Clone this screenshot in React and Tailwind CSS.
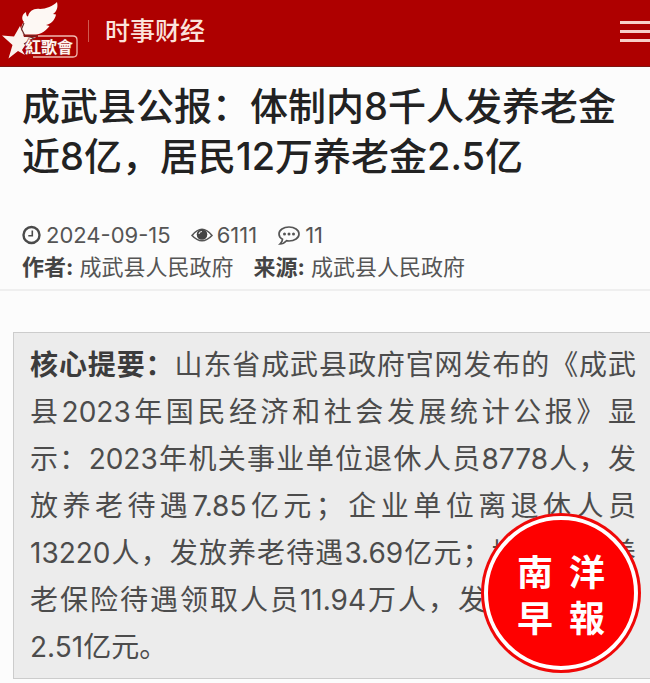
import React from "react";

const summaryLines = [
  "县2023年国民经济和社会发展统计公报》显",
  "示：2023年机关事业单位退休人员8778人，发",
  "放养老待遇7.85亿元；企业单位离退休人员",
  "13220人，发放养老待遇3.69亿元；城乡居民养",
  "老保险待遇领取人员11.94万人，发放养老待遇",
];

function Logo() {
  return (
    <a href="#" aria-label="紅歌會" className="block">
      <svg width="80" height="66" viewBox="0 0 80 66">
        <path
          d="M2 35.500L14 36.500L20 26L24 37L36 37L26 44L22 50L25 55L18 51L8.500 58.500L12.500 45Z"
          fill="#fbf3ee"
        />
        <path
          d="M23 34.500C20.500 30 21 25 24 22C21 19 22 14 26 12C26 15 27 16.500 28 16.500C29 11 34 8 40 9C46 9 53 6 57 2C58.500 8 56 12 53 14L56 14.500C55 20 51 24 46 25L49.500 26C46 31 41 34 36 34.500Z"
          fill="#fdf8f4"
        />
        <path
          d="M24 23L21.500 29L25 36L35 35.500L39 37M25 36L34 38L24 44"
          fill="none"
          stroke="#6d2a28"
          strokeWidth="1.200"
        />
        <path
          d="M38 36H73Q77 36 77 40V53Q77 57 73 57H33"
          fill="none"
          stroke="#f0b9b0"
          strokeWidth="1.300"
        />
        <text
          x="25"
          y="53"
          fontSize="16"
          fontWeight="700"
          fill="#fff5f0"
          stroke="#9a1a16"
          strokeWidth="1.200"
          paintOrder="stroke"
          fontFamily="'Noto Sans CJK TC', sans-serif"
        >
          紅歌會
        </text>
      </svg>
    </a>
  );
}

function ClockIcon() {
  return (
    <svg width="20" height="20" viewBox="0 0 20 20" fill="none" stroke="#4a4a4a">
      <circle cx="9.500" cy="10" r="8" strokeWidth="2.400" />
      <path d="M10.300 5.500V10.800H6.300" strokeWidth="1.600" />
    </svg>
  );
}

function EyeIcon() {
  return (
    <svg width="22" height="20" viewBox="0 0 22 20">
      <path d="M1 10.500Q11 -2 21 10.500Q11 21 1 10.500Z" fill="#fff" stroke="#555" strokeWidth="1.600" />
      <circle cx="11" cy="9.500" r="5.300" fill="#444" />
      <path d="M8 9Q8.500 6.500 11 6.500" fill="none" stroke="#ddd" strokeWidth="1.200" />
    </svg>
  );
}

function CommentIcon() {
  return (
    <svg width="24" height="20" viewBox="0 0 24 20">
      <path
        d="M12 2C17.500 2 22 5 22 9S17.500 16 12 16L9.500 15.700Q6.500 19 3 19Q5.500 16.500 5.500 14.300Q2 12.300 2 9C2 5 6.500 2 12 2Z"
        fill="none"
        stroke="#555"
        strokeWidth="1.700"
      />
      <circle cx="7.500" cy="9" r="1.500" fill="#555" />
      <circle cx="12" cy="9" r="1.500" fill="#555" />
      <circle cx="16.500" cy="9" r="1.500" fill="#555" />
    </svg>
  );
}

function Badge() {
  return (
    <div className="absolute right-[9px] bottom-[5px] size-[160px] rounded-full bg-[#f00808] p-[3px]">
      <div className="flex size-full items-center justify-center rounded-full border-4 border-white bg-[#fe0000]">
        <div className="grid grid-cols-2 gap-x-4 text-center font-['Noto_Sans_CJK_TC',sans-serif] text-[36px] leading-[46px] font-bold text-white">
          <span>南</span>
          <span>洋</span>
          <span>早</span>
          <span>報</span>
        </div>
      </div>
    </div>
  );
}

export default function App() {
  return (
    <div className="overflow-hidden bg-[#fcfcfc] pb-1 font-[Inter,'Noto_Sans_CJK_SC',sans-serif]">
      <header className="flex h-[67px] items-center border-b border-[#7d1512] bg-[#ae0000]">
        <Logo />
        <div className="mb-1 ml-2 h-[22px] w-px bg-[#cf5a50]" />
        <a href="#" className="ml-4 pb-1 text-[25px] leading-[36px] font-medium text-[#fbe3dc]">
          时事财经
        </a>
        <button type="button" aria-label="菜单" className="mb-1 ml-auto flex w-[30px] flex-col gap-[6px]">
          <span className="h-[3px] bg-[#f8cfc8]" />
          <span className="h-[3px] bg-[#f8cfc8]" />
          <span className="h-[3px] bg-[#f8cfc8]" />
        </button>
      </header>

      <main>
        <div className="border-b-2 border-[#efefef] px-[22px] pt-[14px] pb-[6px]">
          <h1 className="text-[38px] leading-[50px] font-medium text-[#222]">
            成武县公报：体制内8千人发养老金
            <br />
            近8亿，居民12万养老金2.5亿
          </h1>
          <div className="mt-[38px] text-[22px] leading-[32px] text-[#555]">
            <div className="flex items-center">
              <ClockIcon />
              <span className="ml-1">2024-09-15</span>
              <span className="ml-5 flex items-center gap-1">
                <EyeIcon />
                6111
              </span>
              <span className="ml-5 flex items-center gap-1">
                <CommentIcon />
                11
              </span>
            </div>
            <div className="flex gap-5">
              <span>
                <b className="text-[#444]">作者:</b> 成武县人民政府
              </span>
              <span>
                <b className="text-[#444]">来源:</b> 成武县人民政府
              </span>
            </div>
          </div>
        </div>

        <section className="relative mt-[41px] ml-[13px] border border-r-0 border-[#ccc] bg-[#ececec] pt-[9px] pr-[14px] pb-[7px] pl-4">
          <p className="text-[28px] leading-[47px] text-[#4c4c4c]">
            <span className="block [text-align-last:justify]">
              <b className="text-[#3c3c3c]">核心提要：</b>山东省成武县政府官网发布的《成武
            </span>
            {summaryLines.map((line) => (
              <span key={line} className="block [text-align-last:justify]">
                {line}
              </span>
            ))}
            <span className="block">2.51亿元。</span>
          </p>
          <Badge />
        </section>
      </main>
    </div>
  );
}
